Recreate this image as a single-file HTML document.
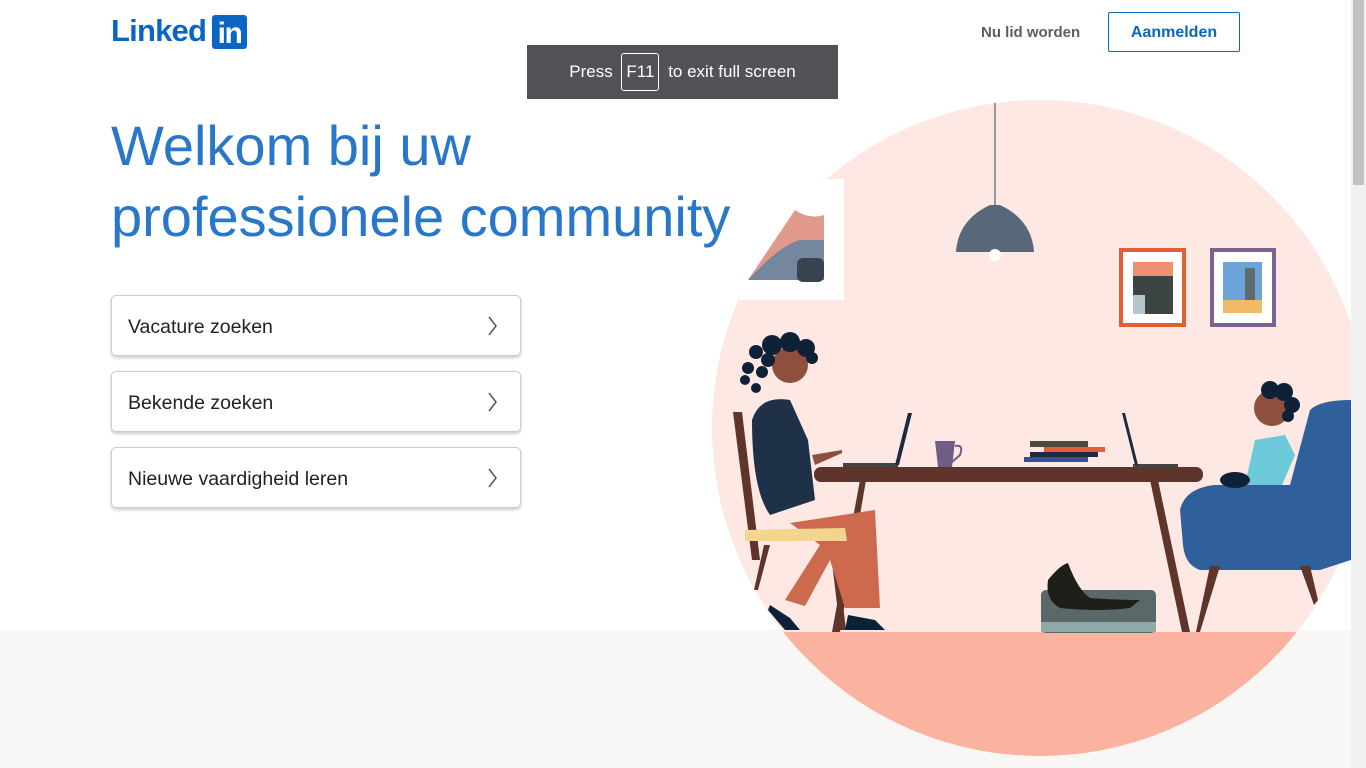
<!DOCTYPE html>
<html><head><meta charset="utf-8"><style>
*{margin:0;padding:0;box-sizing:border-box}
body{width:1366px;height:768px;overflow:hidden;background:#fff;font-family:"Liberation Sans",sans-serif;position:relative}
.bottom{position:absolute;left:0;top:630px;width:1351px;height:138px;background:#f8f7f5}
.sb{position:absolute;left:1351px;top:0;width:15px;height:768px;background:#f1f1f1}
.sb div{position:absolute;left:2px;top:0;width:11px;height:185px;background:#c1c1c1}
.logo{position:absolute;left:111px;top:13px;color:#0a66c2;font-weight:bold;font-size:31px;letter-spacing:-0.8px}
.inbox{position:absolute;left:212px;top:15px;width:35px;height:34px;background:#0a66c2;border-radius:3px;color:#fff;font-weight:bold;font-size:30px;text-align:center;line-height:38px;letter-spacing:-1.5px}
.nav1{position:absolute;left:981px;top:24px;color:#5e5e5e;font-weight:bold;font-size:15px}
.nav2{position:absolute;left:1108px;top:12px;width:132px;height:40px;border:1px solid #0a66c2;border-radius:2px;color:#0a66c2;font-weight:bold;font-size:16px;text-align:center;line-height:39px}
h1{position:absolute;left:111px;top:110px;color:#2977c9;font-weight:normal;font-size:56px;line-height:71px}
.btn{position:absolute;left:111px;width:410px;height:61px;border:1px solid #ccc;border-radius:5px;background:#fff;box-shadow:0 2px 3px rgba(0,0,0,.2);font-size:19.5px;color:#222;padding-left:16px;line-height:62px}
.btn svg{position:absolute;right:22px;top:20px}
.f11{position:absolute;left:527px;top:45px;width:311px;height:54px;background:#515357;color:#fff;font-size:17px;line-height:54px;text-align:center}
.f11 span{display:inline-block;border:1px solid #fff;border-radius:3px;padding:0 4px;line-height:36px;margin:0 4px}
</style></head><body>
<div class="bottom"></div>
<svg style="position:absolute;left:0;top:0" width="1351" height="768">
<defs><clipPath id="c"><circle cx="1040" cy="428" r="328"/></clipPath></defs>
<circle cx="1040" cy="428" r="328" fill="#fde8e3"/>
<g clip-path="url(#c)">
<rect x="700" y="632" width="700" height="140" fill="#fbb29e"/>
</g>
<rect x="740" y="179" width="104" height="121" fill="#fff"/>
<path d="M748 280 L795 210 Q810 220 824 215 L824 280Z" fill="#e0998a"/>
<path d="M748 280 Q780 245 800 240 L824 240 L824 280Z" fill="#74879e"/>
<rect x="797" y="258" width="27" height="24" rx="6" fill="#3a4350"/>
<line x1="995" y1="103" x2="995" y2="205" stroke="#999" stroke-width="2"/>
<path d="M956 252 Q958 220 990 205 L1000 205 Q1032 220 1034 252Z" fill="#586779"/>
<circle cx="995" cy="255" r="6" fill="#fff"/>
<rect x="1121" y="250" width="63" height="75" fill="#fff" stroke="#e35d37" stroke-width="4"/>
<rect x="1133" y="262" width="40" height="52" fill="#3c4444"/><rect x="1133" y="262" width="40" height="14" fill="#f08f70"/>
<rect x="1133" y="295" width="12" height="19" fill="#b5c6cc"/>
<rect x="1212" y="250" width="62" height="75" fill="#fff" stroke="#7a6390" stroke-width="4"/>
<rect x="1223" y="262" width="39" height="40" fill="#6aa4d8"/><rect x="1223" y="300" width="39" height="13" fill="#f0ba67"/>
<rect x="1245" y="268" width="10" height="32" fill="#5c6b6b"/>
<rect x="814" y="467" width="389" height="15" rx="7" fill="#5e342b"/>
<path d="M860 480 L866 480 L840 632 L832 632Z" fill="#5e342b"/>
<path d="M1150 480 L1158 480 L1190 632 L1182 632Z" fill="#5e342b"/>
<rect x="843" y="463" width="55" height="4" fill="#444"/><path d="M895 465 L908 413 L912 413 L899 465Z" fill="#1c2a3f"/>
<rect x="1133" y="464" width="45" height="4" fill="#444"/><path d="M1135 465 L1122 413 L1125 413 L1138 465Z" fill="#1c2a3f"/>
<path d="M935 441 L955 441 L952 467 L938 467Z" fill="#715c86"/>
<path d="M955 446 Q964 444 960 455 L952 462" fill="none" stroke="#715c86" stroke-width="2"/>
<rect x="1030" y="441" width="58" height="6" fill="#4a4a3e"/><rect x="1044" y="447" width="61" height="5" fill="#e35d37"/>
<rect x="1030" y="452" width="68" height="5" fill="#1d2a3f"/><rect x="1024" y="457" width="64" height="5" fill="#2e5399"/>
<path d="M733 412 L742 412 L760 560 L752 560Z" fill="#5e342b"/>
<path d="M764 545 L770 545 L758 590 L754 590Z M830 545 L836 545 L846 630 L840 630Z" fill="#5e342b"/>
<path d="M790 523 L875 510 L880 608 L845 608 L830 560 L805 606 L785 600 L820 545Z" fill="#cd6a4d"/>
<path d="M752 420 Q760 395 790 400 L808 440 L815 500 L770 515 Q752 490 752 420Z" fill="#1f3149"/>
<path d="M745 530 L845 528 L847 541 L745 541Z" fill="#f3d58f"/>
<circle cx="790" cy="365" r="18" fill="#8e4f3d"/>
<g fill="#0e2137"><circle cx="772" cy="345" r="10"/><circle cx="790" cy="342" r="10"/><circle cx="806" cy="348" r="9"/><circle cx="812" cy="358" r="6"/><circle cx="756" cy="352" r="7"/><circle cx="748" cy="368" r="6"/><circle cx="745" cy="380" r="5"/><circle cx="762" cy="372" r="6"/><circle cx="756" cy="388" r="5"/><circle cx="768" cy="360" r="7"/></g>
<path d="M770 605 L790 618 L800 630 L785 630 L768 610Z M848 615 L875 620 L885 630 L845 630Z" fill="#0e2137"/>
<path d="M812 455 L842 450 L842 453 L815 465Z" fill="#8e4f3d"/>
<path d="M1180 510 Q1185 488 1215 485 L1290 485 L1310 410 Q1320 400 1351 400 L1351 560 L1320 570 L1200 570 Q1185 565 1183 545Z" fill="#2f609c"/>
<path d="M1210 566 L1220 566 L1200 632 L1196 632Z M1300 566 L1310 566 L1318 600 L1314 605Z" fill="#5e342b"/>
<path d="M1255 440 L1285 435 L1295 455 L1282 485 L1245 485 Z" fill="#6cc9d9"/>
<circle cx="1272" cy="408" r="18" fill="#8e4f3d"/>
<g fill="#0e2137"><circle cx="1270" cy="390" r="9"/><circle cx="1284" cy="392" r="9"/><circle cx="1292" cy="405" r="8"/><circle cx="1288" cy="416" r="6"/></g>
<ellipse cx="1235" cy="480" rx="15" ry="8" fill="#0e2137"/>
<rect x="1041" y="590" width="115" height="43" rx="5" fill="#5a6869"/>
<rect x="1041" y="622" width="115" height="10" fill="#93a8a9"/>
<path d="M1048 580 Q1060 565 1068 563 Q1078 590 1090 598 Q1120 600 1140 600 L1130 608 Q1100 612 1060 608 Q1045 600 1048 580Z" fill="#1f1f1a"/>
</svg>
<div class="sb"><div></div></div>
<div class="logo">Linked</div><div class="inbox">in</div>
<div class="nav1">Nu lid worden</div>
<div class="nav2">Aanmelden</div>
<h1>Welkom bij uw<br>professionele community</h1>
<div class="btn" style="top:295px">Vacature zoeken<svg width="10" height="20"><path d="M1 1 L8 10 L1 19" fill="none" stroke="#555" stroke-width="1.5"/></svg></div>
<div class="btn" style="top:371px">Bekende zoeken<svg width="10" height="20"><path d="M1 1 L8 10 L1 19" fill="none" stroke="#555" stroke-width="1.5"/></svg></div>
<div class="btn" style="top:447px">Nieuwe vaardigheid leren<svg width="10" height="20"><path d="M1 1 L8 10 L1 19" fill="none" stroke="#555" stroke-width="1.5"/></svg></div>
<div class="f11">Press <span>F11</span> to exit full screen</div>
</body></html>
